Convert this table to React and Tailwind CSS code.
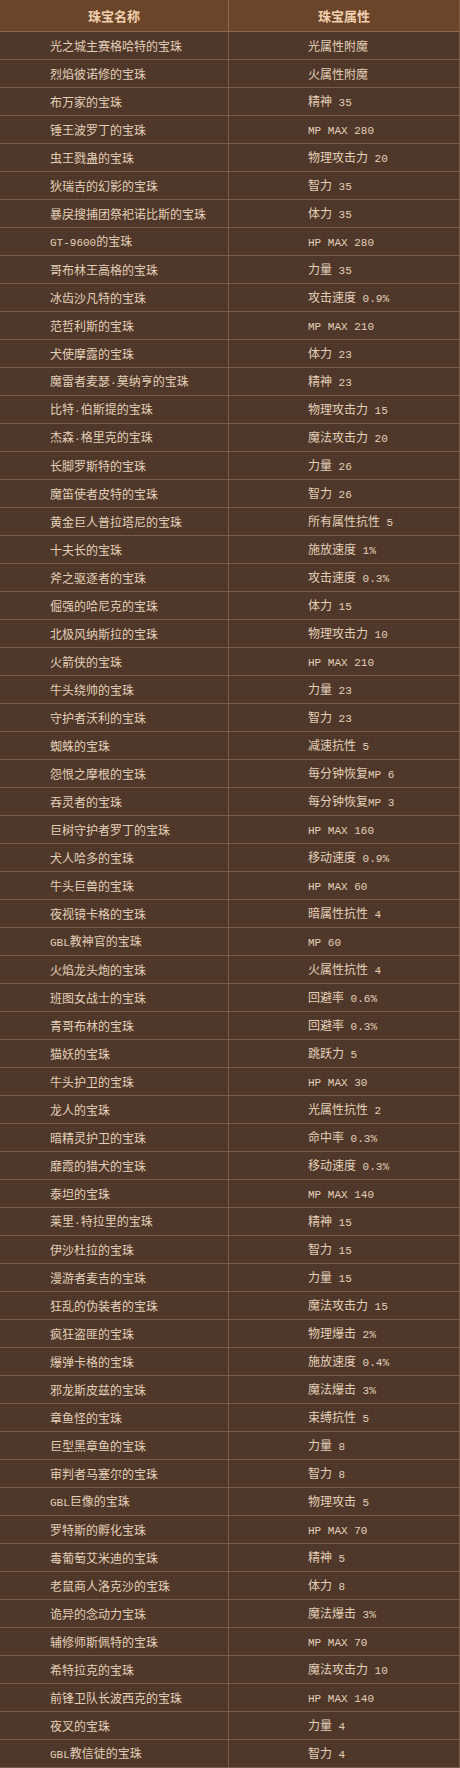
import React from 'react';

const rows = [
  ['光之城主赛格哈特的宝珠', '光属性附魔'],
  ['烈焰彼诺修的宝珠', '火属性附魔'],
  ['布万家的宝珠', '精神 35'],
  ['锤王波罗丁的宝珠', 'MP MAX 280'],
  ['虫王戮蛊的宝珠', '物理攻击力 20'],
  ['狄瑞吉的幻影的宝珠', '智力 35'],
  ['暴戾搜捕团祭祀诺比斯的宝珠', '体力 35'],
  ['GT-9600的宝珠', 'HP MAX 280'],
  ['哥布林王高格的宝珠', '力量 35'],
  ['冰齿沙凡特的宝珠', '攻击速度 0.9%'],
  ['范哲利斯的宝珠', 'MP MAX 210'],
  ['犬使摩露的宝珠', '体力 23'],
  ['魔雷者麦瑟·莫纳亨的宝珠', '精神 23'],
  ['比特·伯斯提的宝珠', '物理攻击力 15'],
  ['杰森·格里克的宝珠', '魔法攻击力 20'],
  ['长脚罗斯特的宝珠', '力量 26'],
  ['魔笛使者皮特的宝珠', '智力 26'],
  ['黄金巨人普拉塔尼的宝珠', '所有属性抗性 5'],
  ['十夫长的宝珠', '施放速度 1%'],
  ['斧之驱逐者的宝珠', '攻击速度 0.3%'],
  ['倔强的哈尼克的宝珠', '体力 15'],
  ['北极风纳斯拉的宝珠', '物理攻击力 10'],
  ['火箭侠的宝珠', 'HP MAX 210'],
  ['牛头绕帅的宝珠', '力量 23'],
  ['守护者沃利的宝珠', '智力 23'],
  ['蜘蛛的宝珠', '减速抗性 5'],
  ['怨恨之摩根的宝珠', '每分钟恢复MP 6'],
  ['吞灵者的宝珠', '每分钟恢复MP 3'],
  ['巨树守护者罗丁的宝珠', 'HP MAX 160'],
  ['犬人哈多的宝珠', '移动速度 0.9%'],
  ['牛头巨兽的宝珠', 'HP MAX 60'],
  ['夜视镜卡格的宝珠', '暗属性抗性 4'],
  ['GBL教神官的宝珠', 'MP 60'],
  ['火焰龙头炮的宝珠', '火属性抗性 4'],
  ['班图女战士的宝珠', '回避率 0.6%'],
  ['青哥布林的宝珠', '回避率 0.3%'],
  ['猫妖的宝珠', '跳跃力 5'],
  ['牛头护卫的宝珠', 'HP MAX 30'],
  ['龙人的宝珠', '光属性抗性 2'],
  ['暗精灵护卫的宝珠', '命中率 0.3%'],
  ['靡霞的猎犬的宝珠', '移动速度 0.3%'],
  ['泰坦的宝珠', 'MP MAX 140'],
  ['莱里·特拉里的宝珠', '精神 15'],
  ['伊沙杜拉的宝珠', '智力 15'],
  ['漫游者麦吉的宝珠', '力量 15'],
  ['狂乱的伪装者的宝珠', '魔法攻击力 15'],
  ['疯狂盗匪的宝珠', '物理爆击 2%'],
  ['爆弹卡格的宝珠', '施放速度 0.4%'],
  ['邪龙斯皮兹的宝珠', '魔法爆击 3%'],
  ['章鱼怪的宝珠', '束缚抗性 5'],
  ['巨型黑章鱼的宝珠', '力量 8'],
  ['审判者马塞尔的宝珠', '智力 8'],
  ['GBL巨像的宝珠', '物理攻击 5'],
  ['罗特斯的孵化宝珠', 'HP MAX 70'],
  ['毒葡萄艾米迪的宝珠', '精神 5'],
  ['老鼠商人洛克沙的宝珠', '体力 8'],
  ['诡异的念动力宝珠', '魔法爆击 3%'],
  ['辅修师斯佩特的宝珠', 'MP MAX 70'],
  ['希特拉克的宝珠', '魔法攻击力 10'],
  ['前锋卫队长波西克的宝珠', 'HP MAX 140'],
  ['夜叉的宝珠', '力量 4'],
  ['GBL教信徒的宝珠', '智力 4'],
];

// ascii runs get the narrow mono face, like the old bitmap font
const Mixed = ({ text }) => (
  <span>
    {text.split(/([\x20-\x7e\u00b7]+)/).filter(Boolean).map((part, i) =>
      /^[\x20-\x7e\u00b7]+$/.test(part) ? (
        <span key={i} className="font-['Liberation_Mono',monospace] text-[11px] whitespace-pre">
          {part}
        </span>
      ) : (
        <span key={i}>{part}</span>
      )
    )}
  </span>
);

export default function App() {
  return (
    <div className="w-[460px] bg-[#4f3829] font-['Noto_Sans_CJK_SC',sans-serif] text-[12px] text-[#e3cfb8] border-r border-[#7b5e47]">
      <div className="grid grid-cols-[229px_1fr] h-[32px] bg-[#6b4529] border-b border-[#8a6a50] font-bold text-[13px] text-[#f0cfae]">
        <div className="flex items-center justify-center border-r border-[#8a6a50]">珠宝名称</div>
        <div className="flex items-center justify-center">珠宝属性</div>
      </div>
      {rows.map(([name, attr], i) => (
        <div key={i} className="grid grid-cols-[229px_1fr] h-[28px] border-b border-[#7b5e47]">
          <div className="flex items-center pl-[50px] border-r border-[#7b5e47] whitespace-nowrap">
            <Mixed text={name} />
          </div>
          <div className="flex items-center pl-[79px] whitespace-nowrap">
            <Mixed text={attr} />
          </div>
        </div>
      ))}
    </div>
  );
}
